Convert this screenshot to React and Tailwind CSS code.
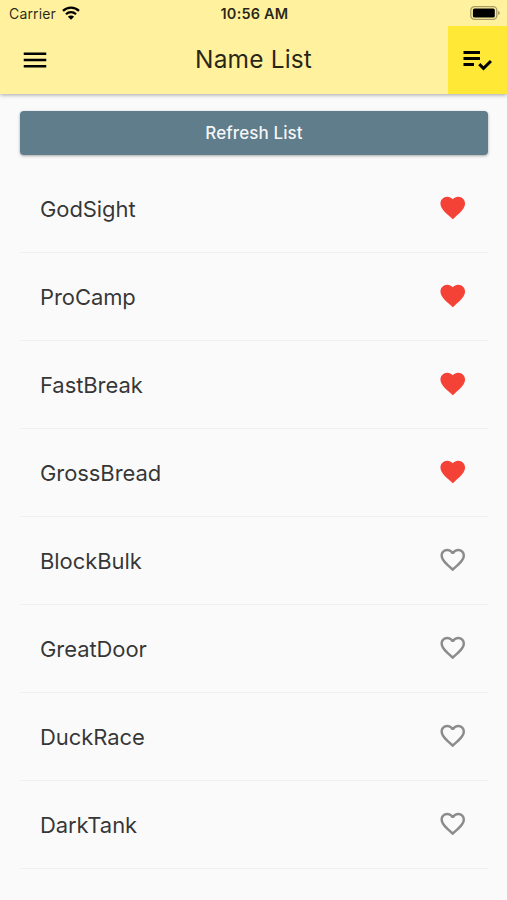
import { useState } from "react";
import clsx from "clsx";

const NAMES = [
    { name: "GodSight", liked: true },
    { name: "ProCamp", liked: true },
    { name: "FastBreak", liked: true },
    { name: "GrossBread", liked: true },
    { name: "BlockBulk", liked: false },
    { name: "GreatDoor", liked: false },
    { name: "DuckRace", liked: false },
    { name: "DarkTank", liked: false },
];

const HEART = "M12 21.35l-1.45-1.32C5.4 15.36 2 12.28 2 8.5 2 5.42 4.42 3 7.5 3c1.74 0 3.41.81 4.5 2.09C13.09 3.81 14.76 3 16.5 3 19.58 3 22 5.42 22 8.5c0 3.78-3.4 6.86-8.55 11.54L12 21.35z";
const HEART_OUTLINE = "M16.5 3c-1.74 0-3.41.81-4.5 2.09C10.91 3.81 9.24 3 7.5 3 4.42 3 2 5.42 2 8.5c0 3.78 3.4 6.86 8.55 11.54L12 21.35l1.45-1.32C18.6 15.36 22 12.28 22 8.5 22 5.42 19.58 3 16.5 3zm-4.4 15.55l-.1.1-.1-.1C7.14 14.24 4 11.39 4 8.5 4 6.5 5.5 5 7.5 5c1.54 0 3.04.99 3.57 2.36h1.87C13.46 5.99 14.96 5 16.5 5c2 0 3.5 1.5 3.5 3.5 0 2.89-3.14 5.74-7.9 10.05z";

function Icon({ d, className }) {
    return (
        <svg viewBox="0 0 24 24" fill="currentColor" className={className}>
            <path d={d} />
        </svg>
    );
}

function StatusBar() {
    return (
        <div className="grid h-[26px] grid-cols-3 items-center pl-[9px] pr-[7px] text-black/85">
            <div className="flex items-center gap-[6px] pt-[2px]">
                <span className="text-[14px] leading-none tracking-[0.15px]">Carrier</span>
                <svg viewBox="0 0 18 14" className="-mt-[2px] h-[14px] w-[18px] text-black" fill="none" stroke="currentColor" strokeWidth="2.3">
                    <path d="M1 4.9a11.5 11.5 0 0 1 16 0" />
                    <path d="M4 8.2a7.1 7.1 0 0 1 10 0" />
                    <path d="M9 13.8 5.9 10.7a4.4 4.4 0 0 1 6.2 0z" fill="currentColor" stroke="none" />
                </svg>
            </div>
            <div className="pt-[2px] text-center text-[14.5px] font-semibold leading-none tracking-[0.2px]">10:56 AM</div>
            <svg viewBox="0 0 30 14" className="h-[14px] w-[30px] justify-self-end">
                <rect x="0.8" y="0.7" width="26" height="12.6" rx="3.6" fill="none" stroke="#000" strokeOpacity="0.35" strokeWidth="1.3" />
                <rect x="2.9" y="2.4" width="21.9" height="9.2" rx="1.6" fill="#000" />
                <path d="M28.2 5v4c.9-.3 1.5-1.1 1.5-2s-.6-1.7-1.5-2z" fill="#000" fillOpacity="0.4" />
            </svg>
        </div>
    );
}

function AppBar() {
    return (
        <header className="relative h-[94px] bg-[#fff19d] shadow-[0_1px_4px_rgba(0,0,0,0.35)]">
            <StatusBar />
            <div className="flex h-[68px] items-center justify-between">
                <button className="flex h-full w-[59px] items-center pl-5" aria-label="Menu">
                    <Icon d="M3 18h18v-2H3v2zm0-5h18v-2H3v2zm0-7v2h18V6H3z" className="size-[30px] text-black" />
                </button>
                <h1 className="pb-[2px] text-[24.5px] tracking-[0.15px] text-black/85">Name List</h1>
                <button className="flex h-full w-[59px] items-center justify-center bg-[#ffe936] pr-px" aria-label="Saved names">
                    <Icon
                        d="M3 10h11v2H3zm0-4h11v2H3zm0 8h7v2H3zm17.59-2.07l-4.25 4.24-2.12-2.12-1.41 1.41L16.34 19 22 13.34z"
                        className="size-9 text-black"
                    />
                </button>
            </div>
        </header>
    );
}

export default function App() {
    const [names, setNames] = useState(NAMES);

    const toggle = (name) => {
        setNames(names.map((n) => (n.name === name ? { ...n, liked: !n.liked } : n)));
    };

    return (
        <div className="h-[900px] w-[507px] overflow-hidden bg-[#fafafa] font-['Inter',sans-serif]">
            <AppBar />
            <main className="pl-5 pr-[19px] pt-[17px]">
                <button
                    onClick={() => setNames(NAMES)}
                    className="flex h-[44px] w-full items-center justify-center rounded-[4px] bg-[#607d8b] pt-[2px] text-[17px] font-medium tracking-[0.1px] text-white/95 shadow-[0_1px_3px_rgba(0,0,0,0.35)]"
                >
                    Refresh List
                </button>
                <ul className="pt-[10px]">
                    {names.map(({ name, liked }) => (
                        <li key={name} className="flex h-[88px] items-center justify-between border-b border-[#f0f0f0] pl-5 pr-[20.5px]">
                            <span className="pt-[2px] text-[22px] tracking-[-0.08px] text-black/80">{name}</span>
                            <button onClick={() => toggle(name)} className="pb-px" aria-label={`Like ${name}`}>
                                <Icon
                                    d={liked ? HEART : HEART_OUTLINE}
                                    className={clsx("size-[29.5px]", liked ? "text-[#f44336]" : "text-[#8b8b8b]")}
                                />
                            </button>
                        </li>
                    ))}
                </ul>
            </main>
        </div>
    );
}
